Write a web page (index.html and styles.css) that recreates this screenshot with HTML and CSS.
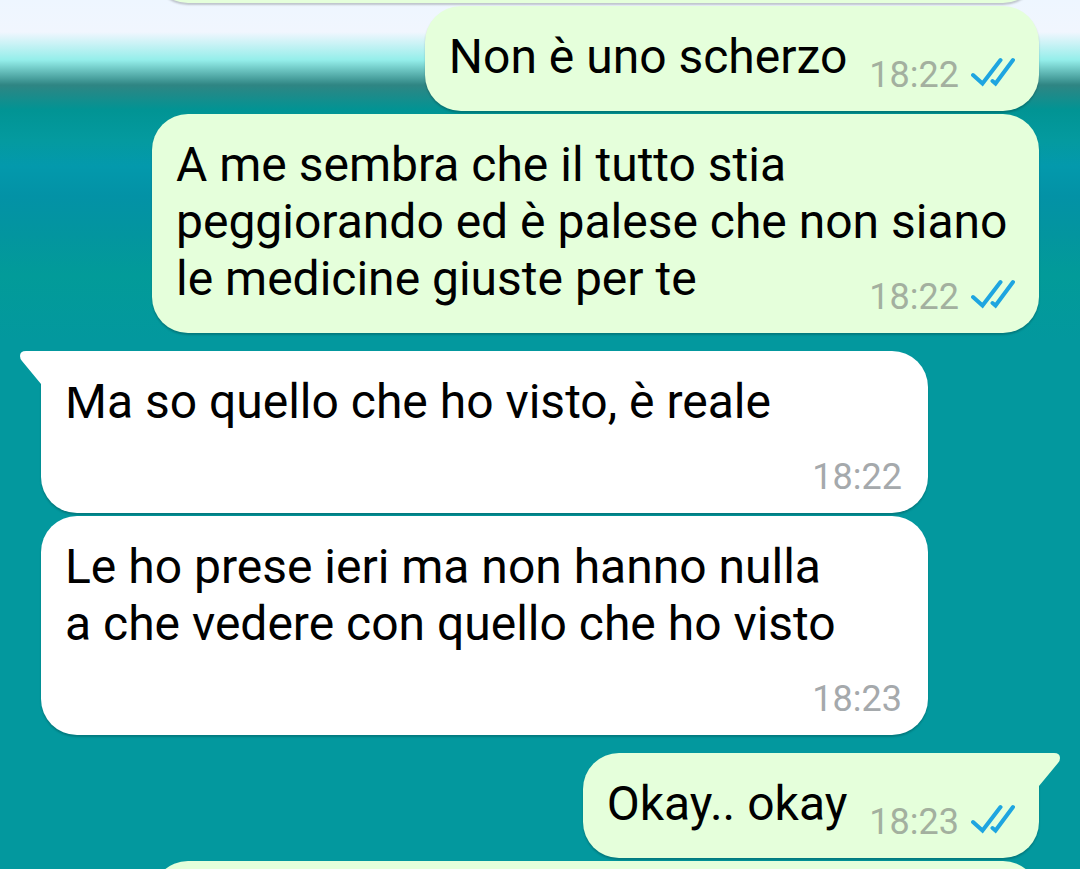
FILE: index.html
```
<!DOCTYPE html>
<html lang="it">
  <head>
    <meta charset="UTF-8" />
    <meta name="viewport" content="width=device-width, initial-scale=1.0" />
    <title>Chat</title>
    <link rel="stylesheet" href="styles.css">
  </head>
  <body>
    <svg class="sprite" aria-hidden="true">
      <symbol id="ticks" viewBox="0 0 44 32">
        <path d="M2 19 L11.500 27.500 L29.500 4 M21.500 25 L24.500 27.500 L42 4" />
      </symbol>
    </svg>
    <main class="chat">
      <div class="bubble out clippedTop"></div>
      <div class="bubble out row">
        <p>Non è uno scherzo</p>
        <div class="meta">
          <time>18:22</time>
          <svg class="ticks" role="img" aria-label="Letto"><use href="#ticks" /></svg>
        </div>
      </div>
      <div class="bubble out stack">
        <p>A me sembra che il tutto stia<br />peggiorando ed è palese che non siano<br />le medicine giuste per te</p>
        <div class="meta">
          <time>18:22</time>
          <svg class="ticks" role="img" aria-label="Letto"><use href="#ticks" /></svg>
        </div>
      </div>
      <div class="bubble in first">
        <svg class="tail" viewBox="0 0 60 36" aria-hidden="true">
          <path d="M60 0 H6 Q0 0 0 5 Q0 8 2 10 L21 33 V36 H60 Z" />
        </svg>
        <p>Ma so quello che ho visto, è reale</p>
        <div class="meta"><time>18:22</time></div>
      </div>
      <div class="bubble in">
        <p>Le ho prese ieri ma non hanno nulla<br />a che vedere con quello che ho visto</p>
        <div class="meta"><time>18:23</time></div>
      </div>
      <div class="bubble out row first">
        <svg class="tail" viewBox="0 0 60 36" aria-hidden="true">
          <path d="M0 0 H54 Q60 0 60 5 Q60 8 58 10 L39 33 V36 H0 Z" />
        </svg>
        <p>Okay.. okay</p>
        <div class="meta">
          <time>18:23</time>
          <svg class="ticks" role="img" aria-label="Letto"><use href="#ticks" /></svg>
        </div>
      </div>
      <div class="bubble out clippedBottom"></div>
    </main>
  </body>
</html>
```

FILE: styles.css
```
* {
  box-sizing: border-box;
  margin: 0;
  padding: 0;
}
body {
  font-family: Roboto, "Liberation Sans", sans-serif;
  font-size: 48px;
  line-height: 57px;
  color: #000000;
  background: #03989e linear-gradient(
      #eef6ff 0,
      #f1f6fe 32px,
      #94eeea 60px,
      #2f8583 85px,
      #019494 110px,
      #049a9f 140px,
      #0399ac 166px,
      #0392a6 196px,
      #03959f 235px,
      #029b99 275px,
      #03989e 340px
    ) no-repeat;
}
.sprite {
  display: none;
}
.chat {
  height: 100vh;
  overflow: hidden;
  padding: 0 41px;
  display: flex;
  flex-direction: column;
  gap: 3px;
}
.bubble {
  flex-shrink: 0;
  position: relative;
  padding: 22px 24px 17px;
  border-radius: 36px;
  box-shadow: 0 2px 2px #00000033;
}
.bubble p {
  padding-bottom: 9px;
}
.bubble.out {
  align-self: flex-end;
  max-width: calc(100% - 111px);
  background-color: #e5ffdb;
}
.bubble.in {
  align-self: flex-start;
  width: calc(100% - 111px);
  background-color: #ffffff;
}
.bubble.first {
  margin-top: 15px;
}
.bubble.in.first {
  border-top-left-radius: 0;
}
.bubble.out.first {
  border-top-right-radius: 0;
}

/* time and ticks beside the text */
.bubble.row {
  display: flex;
  align-items: flex-end;
  gap: 22px;
}
/* time and ticks over the end of the last line */
.bubble.stack {
  display: grid;
  width: 100%;
}
.bubble.stack p,
.bubble.stack .meta {
  grid-area: 1 / 1;
}
.bubble.stack .meta {
  place-self: end;
}
.bubble.in .meta {
  margin-top: 19px;
  padding-right: 2px;
}

.meta {
  display: flex;
  justify-content: flex-end;
  align-items: center;
  gap: 12px;
  font-size: 36px;
  line-height: 38px;
  color: #a5a9ac;
}
.out .meta {
  color: #a3b09f;
}
.ticks {
  width: 44px;
  height: 32px;
  margin-bottom: 6px;
  fill: none;
  stroke: #1ea5e0;
  stroke-width: 4;
  stroke-linecap: round;
}
.tail {
  position: absolute;
  top: 0;
  width: 60px;
  height: 36px;
}
.in .tail {
  left: -21px;
  fill: #ffffff;
}
.out .tail {
  right: -21px;
  fill: #e5ffdb;
}

/* neighbouring messages cut by the edges of the screen */
.clippedTop,
.clippedBottom {
  width: 100%;
  height: 105px;
}
.clippedTop {
  margin-top: -102px;
}
```
